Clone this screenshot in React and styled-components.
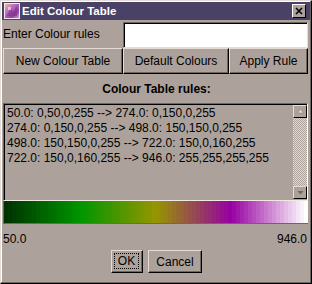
import React from "react";
import styled, { createGlobalStyle } from "styled-components";

const BG = "#ada29b";
const LIGHT = "#e6dcd6";
const SHADE = "#6f6660";

const rules = [
  "50.0: 0,50,0,255 --> 274.0: 0,150,0,255",
  "274.0: 0,150,0,255 --> 498.0: 150,150,0,255",
  "498.0: 150,150,0,255 --> 722.0: 150,0,160,255",
  "722.0: 150,0,160,255 --> 946.0: 255,255,255,255",
];

const stops = [
  [50, [0, 50, 0]],
  [274, [0, 150, 0]],
  [498, [150, 150, 0]],
  [722, [150, 0, 160]],
  [946, [255, 255, 255]],
];

// stepped colour table, like the banded strip in the dialog
const colourAt = (v) => {
  for (let i = 0; i < stops.length - 1; i++) {
    const [a, ca] = stops[i];
    const [b, cb] = stops[i + 1];
    if (v <= b) {
      const t = (v - a) / (b - a);
      return ca.map((c, k) => Math.round(c + (cb[k] - c) * t));
    }
  }
  return stops[stops.length - 1][1];
};

const buildStrip = (steps) => {
  const parts = [];
  for (let i = 0; i < steps; i++) {
    const v = 50 + ((946 - 50) * i) / (steps - 1);
    const [r, g, b] = colourAt(v);
    const from = ((i / steps) * 100).toFixed(3);
    const to = (((i + 1) / steps) * 100).toFixed(3);
    parts.push(`rgb(${r},${g},${b}) ${from}% ${to}%`);
  }
  return `linear-gradient(to right, ${parts.join(", ")})`;
};

const GlobalStyle = createGlobalStyle`
  html, body {
    margin: 0;
    padding: 0;
    background: ${BG};
  }
  body {
    font-family: "Liberation Sans", Arial, sans-serif;
    font-size: 12px;
    color: #000;
  }
`;

const Window = styled.div`
  width: 312px;
  height: 284px;
  box-sizing: border-box;
  background: ${BG};
  border: 1px solid;
  border-color: ${LIGHT} #000 #000 ${LIGHT};
  box-shadow: inset -1px -1px ${SHADE}, inset 1px 1px #fff;
  padding: 1px;
  display: flex;
  flex-direction: column;
`;

const TitleBar = styled.div`
  height: 18px;
  background: #4a4266;
  display: flex;
  align-items: center;
  padding: 0 4px 0 2px;
  gap: 2px;
`;

const TitleText = styled.span`
  flex: 1;
  color: #fff;
  font-weight: bold;
  font-size: 11.5px;
  line-height: 18px;
`;

const CloseButton = styled.div`
  width: 14px;
  height: 14px;
  box-sizing: border-box;
  background: ${BG};
  border: 1px solid;
  border-color: #fff #000 #000 #fff;
  display: flex;
  align-items: center;
  justify-content: center;
`;

const Body = styled.div`
  flex: 1;
  display: flex;
  flex-direction: column;
  padding: 2px 2px 0 1px;
`;

const InputRow = styled.div`
  display: flex;
  height: 26px;
  align-items: center;
`;

const Label = styled.label`
  width: 120px;
  line-height: 14px;
  padding-bottom: 2px;
`;

const TextField = styled.div`
  flex: 1;
  height: 26px;
  box-sizing: border-box;
  background: #fff;
  border: 1px solid;
  border-color: ${SHADE} ${LIGHT} ${LIGHT} ${SHADE};
  box-shadow: inset 1px 1px #000;
`;

const ButtonRow = styled.div`
  display: grid;
  grid-template-columns: 120px 106px 1fr;
  height: 26px;
`;

const Button = styled.button`
  box-sizing: border-box;
  height: ${(p) => p.$h || 26}px;
  width: ${(p) => (p.$w ? `${p.$w}px` : "auto")};
  margin: 0;
  padding: 0;
  background: ${BG};
  border: 1px solid;
  border-color: ${LIGHT} #000 #000 ${LIGHT};
  box-shadow: inset -1px -1px ${SHADE};
  font-family: "Liberation Sans", Arial, sans-serif;
  font-size: 12px;
  color: #000;
  display: flex;
  align-items: center;
  justify-content: center;
`;

const Focus = styled.span`
  flex: 1;
  align-self: stretch;
  margin: 2px 3px 3px 2px;
  border: 1px dotted #000;
  display: flex;
  align-items: center;
  justify-content: center;
`;

const SectionTitle = styled.div`
  height: 29px;
  display: flex;
  align-items: center;
  justify-content: center;
  font-weight: bold;
  font-size: 12px;
  padding-left: 2px;
`;

const ScrollPane = styled.div`
  height: 98px;
  box-sizing: border-box;
  display: flex;
  border: 1px solid;
  border-color: ${SHADE} #fff #f0e8e2 ${SHADE};
  box-shadow: inset 1px 1px #000;
`;

const Lines = styled.div`
  flex: 1;
  padding: 2px 3px;
  line-height: 15px;
  white-space: nowrap;
  overflow: hidden;
`;

const ScrollBar = styled.div`
  width: 14px;
  margin: 1px 0 1px 0;
  display: flex;
  flex-direction: column;
  background: repeating-conic-gradient(#e4dad4 0 25%, ${BG} 0 50%) 0 0 / 2px 2px;
`;

const ScrollButton = styled.div`
  height: 13px;
  box-sizing: border-box;
  background: ${BG};
  border: 1px solid;
  border-color: ${LIGHT} #000 #000 ${LIGHT};
  display: flex;
  align-items: center;
  justify-content: center;
`;

const Track = styled.div`
  flex: 1;
`;

const Strip = styled.div`
  height: 23px;
  box-sizing: border-box;
  border-left: 1px solid ${SHADE};
  border-bottom: 1px solid ${SHADE};
`;

const RangeRow = styled.div`
  display: flex;
  justify-content: space-between;
  height: 26px;
  padding-top: 8px;
  box-sizing: border-box;
  line-height: 14px;
  padding-right: 1px;
`;

const Actions = styled.div`
  display: flex;
  justify-content: center;
  gap: 5px;
  padding-left: 2px;
`;

const AppIcon = () => (
  <svg width="16" height="16" viewBox="0 0 16 16">
    <defs>
      <linearGradient id="ig" x1="0" y1="0" x2="1" y2="1">
        <stop offset="0" stopColor="#e8d070" />
        <stop offset="0.35" stopColor="#c070c0" />
        <stop offset="0.7" stopColor="#9040a0" />
        <stop offset="1" stopColor="#d8a8e0" />
      </linearGradient>
    </defs>
    <rect x="0.5" y="0.5" width="15" height="15" fill="url(#ig)" stroke="#f0e8f0" />
    <path d="M3 12 L7 5 L9 9 L13 3 L13 13 L3 13 Z" fill="#7a3088" opacity="0.6" />
    <path d="M4 4 h3 v3 h-3 z" fill="#f4e0f4" opacity="0.7" />
  </svg>
);

const CloseGlyph = () => (
  <svg width="10" height="10" viewBox="0 0 10 10">
    <path d="M2 2 L8 8 M8 2 L2 8" stroke="#000" strokeWidth="1.6" />
  </svg>
);

const ArrowUp = () => (
  <svg width="7" height="5" viewBox="0 0 7 5">
    <polygon points="3.5,0.5 6.5,4 0.5,4" fill="#e8e0da" stroke="#8a807a" strokeWidth="0.6" />
  </svg>
);

const ArrowDown = () => (
  <svg width="7" height="5" viewBox="0 0 7 5">
    <polygon points="0.5,1 6.5,1 3.5,4.5" fill="#6f6660" />
  </svg>
);

export default function App() {
  const strip = buildStrip(76);
  return (
    <>
      <GlobalStyle />
      <Window>
        <TitleBar>
          <AppIcon />
          <TitleText>Edit Colour Table</TitleText>
          <CloseButton>
            <CloseGlyph />
          </CloseButton>
        </TitleBar>
        <Body>
          <InputRow>
            <Label>Enter Colour rules</Label>
            <TextField />
          </InputRow>
          <ButtonRow>
            <Button>New Colour Table</Button>
            <Button>Default Colours</Button>
            <Button>Apply Rule</Button>
          </ButtonRow>
          <SectionTitle>Colour Table rules:</SectionTitle>
          <ScrollPane>
            <Lines>
              {rules.map((r) => (
                <div key={r}>{r}</div>
              ))}
            </Lines>
            <ScrollBar>
              <ScrollButton>
                <ArrowUp />
              </ScrollButton>
              <Track />
              <ScrollButton>
                <ArrowDown />
              </ScrollButton>
            </ScrollBar>
          </ScrollPane>
          <Strip style={{ background: strip }} />
          <RangeRow>
            <span>50.0</span>
            <span>946.0</span>
          </RangeRow>
          <Actions>
            <Button $w={32} $h={23}>
              <Focus>OK</Focus>
            </Button>
            <Button $w={54} $h={23}>
              Cancel
            </Button>
          </Actions>
        </Body>
      </Window>
    </>
  );
}
